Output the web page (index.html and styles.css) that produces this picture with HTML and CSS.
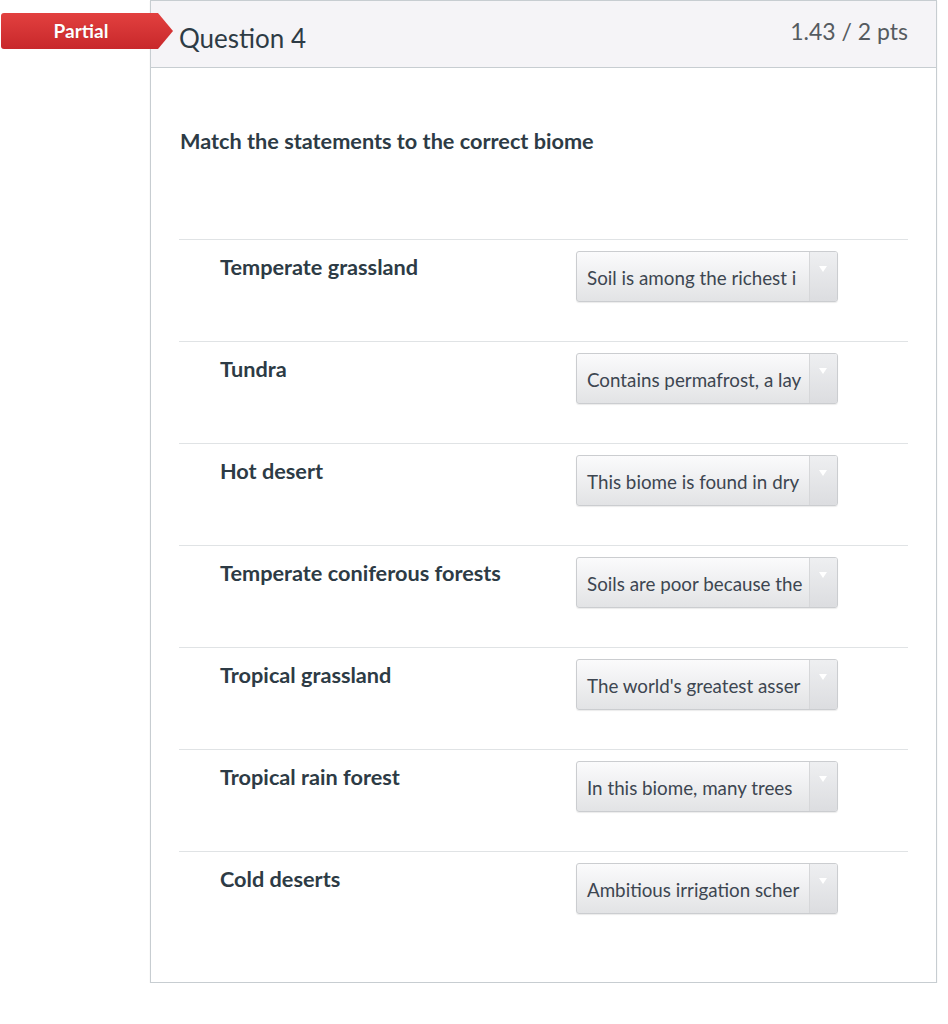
FILE: index.html
```html
<!DOCTYPE html>
<html>
<head>
<meta charset="utf-8">
<link rel="stylesheet" href="styles.css">
</head>
<body>
<div class="page">
  <div class="badge"><span>Partial</span></div>
  <div class="card">
    <div class="header">
      <div class="qtitle">Question 4</div>
      <div class="pts">1.43 / 2 pts</div>
    </div>
    <div class="content">
      <div class="prompt">Match the statements to the correct biome</div>
      <div class="rows">
        <div class="row"><div class="label">Temperate grassland</div><div class="select"><span class="sel-text">Soil is among the richest i</span><span class="sel-arrow"></span></div></div>
        <div class="row"><div class="label">Tundra</div><div class="select"><span class="sel-text">Contains permafrost, a lay</span><span class="sel-arrow"></span></div></div>
        <div class="row"><div class="label">Hot desert</div><div class="select"><span class="sel-text">This biome is found in dry</span><span class="sel-arrow"></span></div></div>
        <div class="row"><div class="label">Temperate coniferous forests</div><div class="select"><span class="sel-text">Soils are poor because the</span><span class="sel-arrow"></span></div></div>
        <div class="row"><div class="label">Tropical grassland</div><div class="select"><span class="sel-text">The world's greatest asser</span><span class="sel-arrow"></span></div></div>
        <div class="row"><div class="label">Tropical rain forest</div><div class="select"><span class="sel-text">In this biome, many trees</span><span class="sel-arrow"></span></div></div>
        <div class="row"><div class="label">Cold deserts</div><div class="select"><span class="sel-text">Ambitious irrigation scher</span><span class="sel-arrow"></span></div></div>
      </div>
    </div>
  </div>
</div>
</body>
</html>
```
FILE: styles.css
```css
html, body {
  margin: 0;
  padding: 0;
  background: #ffffff;
  font-family: Lato, "Open Sans", "Liberation Sans", sans-serif;
}
.page {
  position: relative;
  padding-left: 150px;
  width: 787px;
}
.badge {
  position: absolute;
  left: 1px;
  top: 13px;
  width: 172px;
  height: 36px;
  background: linear-gradient(#e2403f, #c8282b);
  clip-path: polygon(0 0, 157px 0, 172px 50%, 157px 100%, 0 100%);
  border-radius: 3px 0 0 3px;
  display: flex;
  align-items: center;
}
.badge span {
  width: 160px;
  text-align: center;
  color: #fff;
  font-size: 19px;
  font-weight: 700;
  margin-top: -1px;
  text-shadow: 0 0 1px rgba(0,0,0,0.2);
}
.card {
  border: 1px solid #c7cdd1;
  box-shadow: 0 1px 1px rgba(0,0,0,0.12);
  background: #fff;
}
.header {
  height: 66px;
  background: #f5f4f7;
  border-bottom: 1px solid #c7cdd1;
  display: flex;
  justify-content: space-between;
  padding: 0 28px 0 28px;
}
.qtitle {
  font-size: 26px;
  color: #2d3b45;
  margin-top: 20px;
  line-height: 34px;
}
.pts {
  font-size: 23px;
  color: #555b60;
  margin-top: 14px;
  line-height: 32px;
}
.content {
  padding: 58px 28px 29px 28px;
}
.prompt {
  font-size: 21.7px;
  font-weight: 700;
  color: #2d3b45;
  line-height: 30px;
  height: 113px;
  padding-left: 1px;
}
.row {
  border-top: 1px solid #e0e3e5;
  height: 101px;
  display: flex;
  align-items: flex-start;
}
.label {
  font-size: 21.7px;
  font-weight: 700;
  color: #2d3b45;
  width: 356px;
  padding-left: 41px;
  padding-top: 12px;
  line-height: 30px;
}
.select {
  margin-top: 11px;
  width: 260px;
  height: 49px;
  border: 1px solid #cbcdd0;
  border-radius: 3px;
  background: linear-gradient(#fbfbfc, #e2e3e5);
  box-shadow: 0 1px 1px rgba(0,0,0,0.08);
  display: flex;
  overflow: hidden;
}
.sel-text {
  flex: 1;
  white-space: nowrap;
  overflow: hidden;
  font-size: 18.8px;
  color: #3d4651;
  line-height: 49px;
  padding-left: 10px;
  margin-right: 2px;
  margin-top: 1px;
}
.sel-arrow {
  width: 27px;
  border-left: 1px solid #d6d7d9;
  background: linear-gradient(#eeeff1, #dcdde0);
  position: relative;
}
.sel-arrow::after {
  content: "";
  position: absolute;
  left: 9px;
  top: 14px;
  border-left: 4px solid transparent;
  border-right: 4px solid transparent;
  border-top: 6px solid #ffffff;
}
```
